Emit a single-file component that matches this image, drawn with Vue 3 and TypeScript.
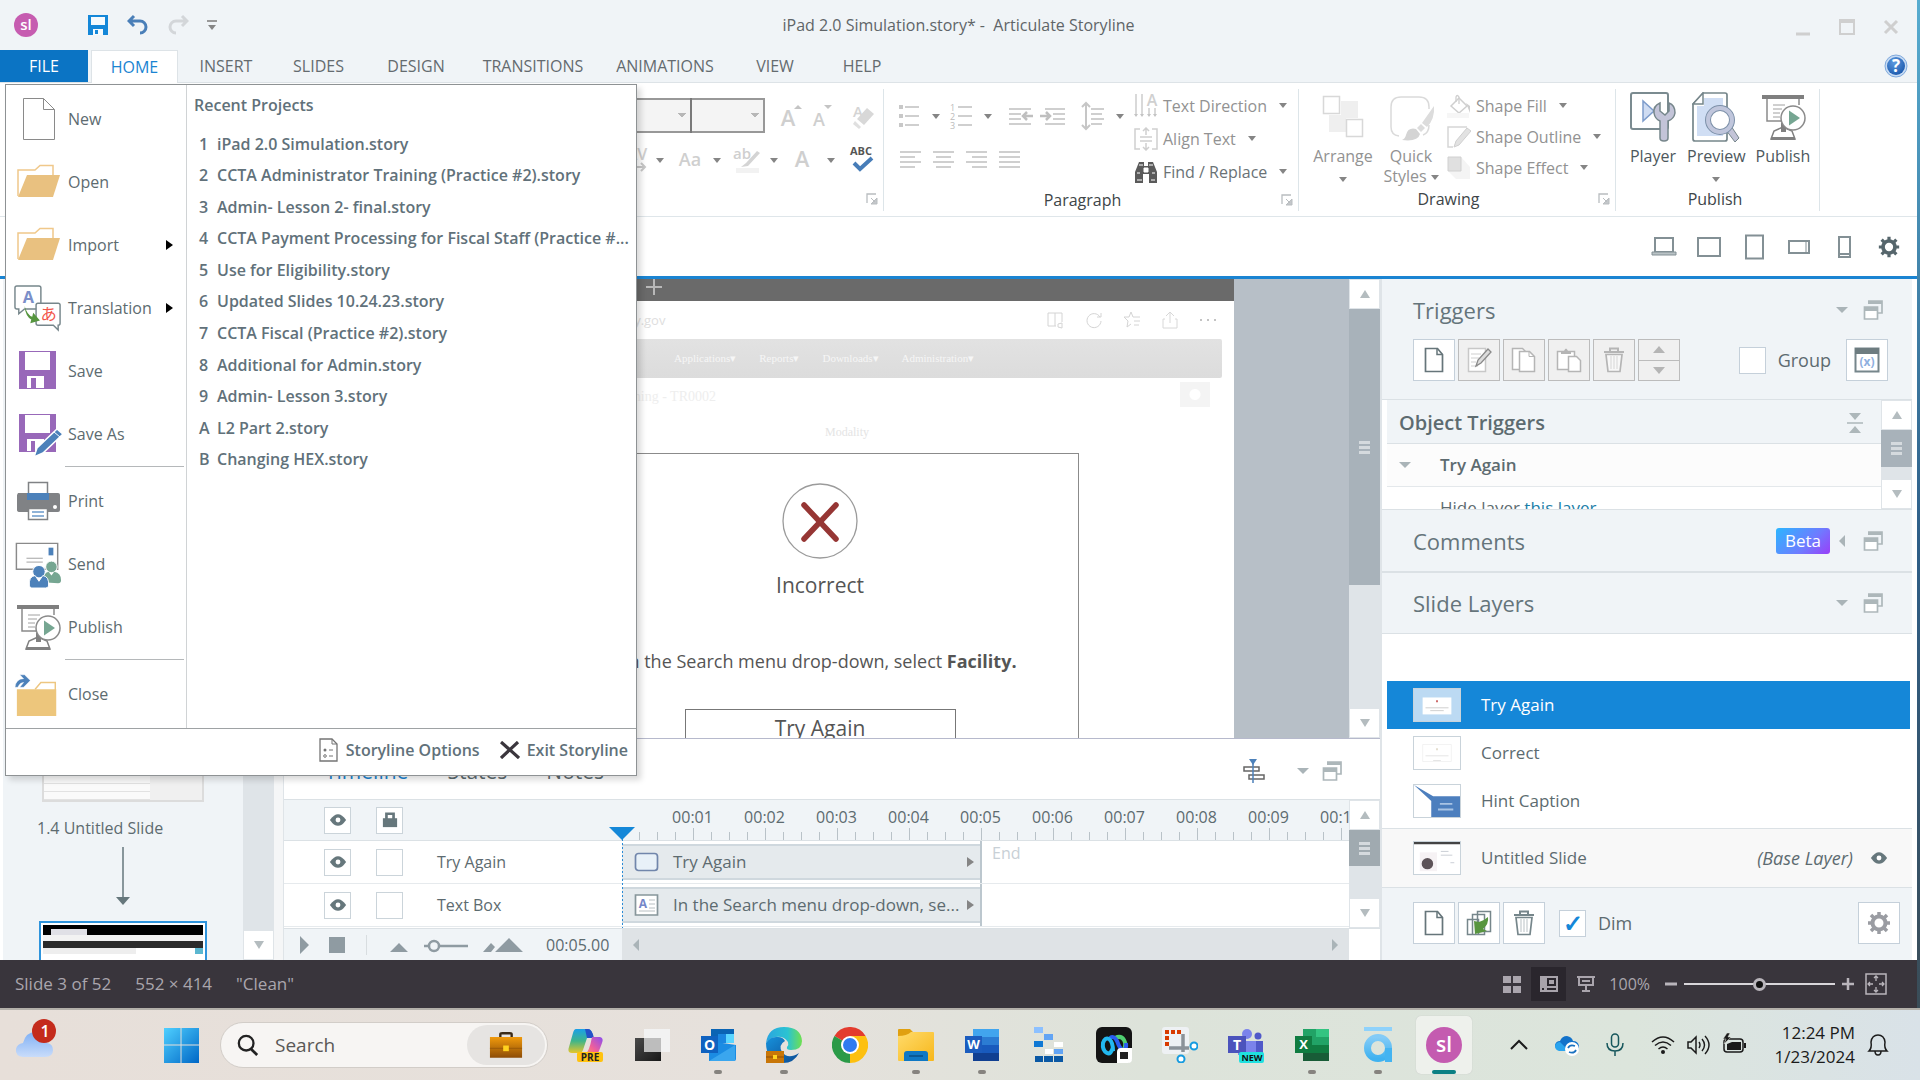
<script setup lang="ts">
import { ref } from 'vue'

interface MenuItem {
  label: string
  icon: string
  submenu?: boolean
  divider?: boolean
}

interface Layer {
  name: string
  kind: 'dialog' | 'faint' | 'hint'
}

const ribbonTabs = ['INSERT', 'SLIDES', 'DESIGN', 'TRANSITIONS', 'ANIMATIONS', 'VIEW', 'HELP']

const menuItems: MenuItem[] = [
  { label: 'New', icon: 'm-new' },
  { label: 'Open', icon: 'm-open' },
  { label: 'Import', icon: 'm-open', submenu: true },
  { label: 'Translation', icon: 'm-translate', submenu: true },
  { label: 'Save', icon: 'm-save' },
  { label: 'Save As', icon: 'm-saveas' },
  { label: 'Print', icon: 'm-print', divider: true },
  { label: 'Send', icon: 'm-send' },
  { label: 'Publish', icon: 'm-publish' },
  { label: 'Close', icon: 'm-close', divider: true },
]

const recent: [string, string][] = [
  ['1', 'iPad 2.0 Simulation.story'],
  ['2', 'CCTA Administrator Training (Practice #2).story'],
  ['3', 'Admin- Lesson 2- final.story'],
  ['4', 'CCTA Payment Processing for Fiscal Staff (Practice #...'],
  ['5', 'Use for Eligibility.story'],
  ['6', 'Updated Slides 10.24.23.story'],
  ['7', 'CCTA Fiscal (Practice #2).story'],
  ['8', 'Additional for Admin.story'],
  ['9', 'Admin- Lesson 3.story'],
  ['A', 'L2 Part 2.story'],
  ['B', 'Changing HEX.story'],
]

const seconds = ['00:01', '00:02', '00:03', '00:04', '00:05', '00:06', '00:07', '00:08', '00:09', '00:10']
const siteNav = ['Applications', 'Reports', 'Downloads', 'Administration']
const devices = ['d-laptop', 'd-tablet-l', 'd-tablet-p', 'd-phone-l', 'd-phone-p', 'gear']
const triggerTools = ['t-edit', 't-copy', 't-paste', 't-trash']

const layers: Layer[] = [
  { name: 'Try Again', kind: 'dialog' },
  { name: 'Correct', kind: 'faint' },
  { name: 'Hint Caption', kind: 'hint' },
]
const activeLayer = ref('Try Again')

const tracks = [
  { name: 'Try Again', label: 'Try Again', icon: 'k-shape' },
  { name: 'Text Box', label: 'In the Search menu drop-down, se...', icon: 'k-text' },
]

const apps = [
  { id: 'a-copilot', name: 'Copilot', open: false },
  { id: 'a-taskview', name: 'Task view', open: false },
  { id: 'a-outlook', name: 'Outlook', open: true },
  { id: 'a-edge', name: 'Edge', open: true },
  { id: 'a-chrome', name: 'Chrome', open: false },
  { id: 'a-files', name: 'File Explorer', open: true },
  { id: 'a-word', name: 'Word', open: true },
  { id: 'a-blocks', name: 'Blocks', open: false },
  { id: 'a-webex', name: 'Webex', open: false },
  { id: 'a-snip', name: 'Snipping Tool', open: false },
  { id: 'a-teams', name: 'Teams', open: false },
  { id: 'a-excel', name: 'Excel', open: true },
  { id: 'a-articulate', name: 'Articulate', open: true },
  { id: 'a-storyline', name: 'Storyline', open: true, active: true },
]

const group = ref(false)
const dim = ref(true)
const zoom = ref(50)
</script>

<template>
  <svg class="paints" aria-hidden="true">
    <defs>
      <linearGradient id="gWin" x1="0" y1="0" x2="1" y2="1"><stop offset="0" stop-color="#4fd0ff" /><stop offset="1" stop-color="#0067c6" /></linearGradient>
      <linearGradient id="gCloud" x1="0" y1="0" x2="0" y2="1"><stop offset="0" stop-color="#7fb0f5" /><stop offset="1" stop-color="#c9dcfa" /></linearGradient>
      <linearGradient id="gCase" x1="0" y1="0" x2="0" y2="1"><stop offset="0" stop-color="#f09a0c" /><stop offset="1" stop-color="#8d4c06" /></linearGradient>
      <linearGradient id="gCopA" x1="0" y1="0" x2="0" y2="1"><stop offset="0" stop-color="#1a9fe8" /><stop offset="0.5" stop-color="#3fb58a" /><stop offset="1" stop-color="#e6c62a" /></linearGradient>
      <linearGradient id="gCopB" x1="1" y1="0" x2="0" y2="1"><stop offset="0" stop-color="#8a4df0" /><stop offset="0.6" stop-color="#f0609a" /><stop offset="1" stop-color="#ff9a5c" /></linearGradient>
      <linearGradient id="gEdge" x1="0" y1="0" x2="1" y2="0"><stop offset="0" stop-color="#2aa5e0" /><stop offset="0.6" stop-color="#2bc3d2" /><stop offset="1" stop-color="#6fe04f" /></linearGradient>
      <linearGradient id="gEdgeB" x1="0" y1="0" x2="1" y2="1"><stop offset="0" stop-color="#1792dc" /><stop offset="1" stop-color="#0c4c94" /></linearGradient>
      <linearGradient id="gFolder" x1="0" y1="0" x2="1" y2="1"><stop offset="0" stop-color="#ffdb6b" /><stop offset="1" stop-color="#f7b71b" /></linearGradient>
      <linearGradient id="gArt" x1="0" y1="0" x2="0" y2="1"><stop offset="0" stop-color="#83cbf7" /><stop offset="1" stop-color="#3fb2f0" /></linearGradient>
      <linearGradient id="gDark" x1="0" y1="0" x2="1" y2="1"><stop offset="0" stop-color="#4a4a4a" /><stop offset="1" stop-color="#181818" /></linearGradient>
      <radialGradient id="gHelp" cx="0.4" cy="0.3" r="0.8"><stop offset="0" stop-color="#5d9ae0" /><stop offset="1" stop-color="#1653a8" /></radialGradient>
    </defs>
  </svg>
  <svg class="symbols" aria-hidden="true">
    <symbol id="logo" viewBox="0 0 24 24"><circle cx="12" cy="12" r="12" fill="#c65cb0" /><text x="12" y="17" font-size="15" font-weight="600" fill="#fff" text-anchor="middle">sl</text></symbol>
    <symbol id="q-save" viewBox="0 0 22 22"><path d="M1 1h20v20H1z" fill="#1487d8" /><path d="M4 3h14v8H4zM6 15h10v6H6z" fill="#f5fafd" /><path d="M8 16h3v4H8z" fill="#1487d8" /></symbol>
    <symbol id="q-undo" viewBox="0 0 22 20"><path d="M7 1L2 6l5 5M3 6h10a6 6 0 0 1 0 12" fill="none" stroke="#4a7fb8" stroke-width="3" /></symbol>
    <symbol id="q-redo" viewBox="0 0 22 20"><path d="M15 1l5 5-5 5M19 6H9a6 6 0 0 0 0 12" fill="none" stroke="#d3d6d9" stroke-width="3" /></symbol>
    <symbol id="help" viewBox="0 0 24 24"><circle cx="12" cy="12" r="11" fill="#c8dcf4" stroke="#7fa9dc" /><circle cx="12" cy="12" r="9" fill="url(#gHelp)" /><text x="12" y="18" font-size="17" font-weight="700" fill="#fff" text-anchor="middle">?</text></symbol>

    <symbol id="m-new" viewBox="0 0 48 48"><path d="M9.500 3.500h20l11 11v30h-31z" fill="#fff" stroke="#8a8a8a" /><path d="M29.500 3.500v11h11" fill="none" stroke="#8a8a8a" /></symbol>
    <symbol id="m-open" viewBox="0 0 48 48"><path d="M4 38V12h17l5-4.500h13V17" fill="#fff" stroke="#f0c88a" stroke-width="1.500" /><path d="M13 17h33l-7 22H4z" fill="#e9c180" /></symbol>
    <symbol id="m-translate" viewBox="0 0 50 50"><path d="M3 2h23q2 0 2 2v20q0 2-2 2H11l-6 5v-5H3q-2 0-2-2V4q0-2 2-2z" fill="#fff" stroke="#76868b" stroke-width="1.500" /><text x="15" y="20" font-size="17" font-weight="700" fill="#7b8fc9" text-anchor="middle">A</text><path d="M25 20h21q2 0 2 2v19q0 2-2 2v5l-5-5H25q-2 0-2-2V22q0-2 2-2z" fill="#fff" stroke="#76868b" stroke-width="1.500" /><path d="M11 23q3 10 8 11l1-4 7 8-10 3 1-4q-6-3-7-14z" fill="#56953f" /><text x="36" y="38" font-size="17" fill="#f2564b" text-anchor="middle">あ</text></symbol>
    <symbol id="m-save" viewBox="0 0 48 48"><path d="M5 4h37v38H5z" fill="#9868b9" /><path d="M11 5h25v18H11zM13 29h17v12H13z" fill="#fff" /><path d="M17 31h5v10h-5z" fill="#9868b9" /></symbol>
    <symbol id="m-saveas" viewBox="0 0 48 48"><path d="M5 4h37v38H5z" fill="#9868b9" /><path d="M11 5h25v18H11zM13 29h17v12H13z" fill="#fff" /><path d="M17 31h4v10h-4z" fill="#9868b9" /><path d="M20 47l3-9 20-19 6 5-20 19z" fill="#4c81ba" stroke="#fff" stroke-width="1.500" /><path d="M40 22l6 5" stroke="#fff" /></symbol>
    <symbol id="m-print" viewBox="0 0 48 48"><path d="M4 16h40q2 0 2 2v15q0 2-2 2H6q-3 0-3-2V18z" fill="#808285" /><path d="M14.500 5.500h19v15h-19z" fill="#fff" stroke="#808285" stroke-width="1.500" /><path d="M13 16h22v7H13z" fill="#4c81ba" /><path d="M14.500 31.500h19v11h-19z" fill="#fff" stroke="#808285" stroke-width="1.500" /><path d="M18 35h12M18 39h12" stroke="#6b9bcb" stroke-width="1.500" /><circle cx="41" cy="30" r="2" fill="#fff" /></symbol>
    <symbol id="m-send" viewBox="0 0 50 50"><path d="M2.500 3.500h43v27h-43z" fill="#fff" stroke="#8a8a8a" stroke-width="1.500" /><path d="M36 8h5v8h-5z" fill="#4c81ba" /><path d="M13 19h17M13 23h17" stroke="#a0a0a0" /><circle cx="39" cy="28" r="6" fill="#76a692" stroke="#fff" /><path d="M30 44q0-10 6-11l3 4 3-4q7 1 7 9 0 3-3 3z" fill="#76a692" /><circle cx="26" cy="33" r="6.500" fill="#4c81ba" stroke="#fff" /><path d="M16 48q-1-10 6-11l4 6 4-6q7 1 6 11-1 2-3 2H18z" fill="#4c81ba" stroke="#fff" /></symbol>
    <symbol id="m-publish" viewBox="0 0 48 48"><path d="M3 2h42v4H3z" fill="#7f7f7f" /><path d="M8 6v22h16M40 6v6" fill="none" stroke="#8a8a8a" stroke-width="1.500" /><path d="M14 12h12M14 16h9M14 20h7M14 24h7" stroke="#a0a0a0" /><path d="M24 34l-9 4-3 8h24l-3-8z" fill="#fff" stroke="#808080" stroke-width="1.500" /><path d="M22 30h5v9h-5zM12 44h24v3H12z" fill="#808080" /><circle cx="34" cy="25" r="12" fill="#fff" stroke="#8a8a8a" stroke-width="1.500" /><path d="M30 17.500v15l11-7.500z" fill="#76a692" /></symbol>
    <symbol id="m-close" viewBox="0 0 50 50"><path d="M22 20l6-7h15v8" fill="#fff" stroke="#edc680" stroke-width="1.500" /><path d="M3 20h41v28H3z" fill="#edc67c" /><path d="M1 18q1-9 9-9l-4-4h5l6 6-7 7H6l4-5q-4 0-6 5z" fill="#4c81ba" stroke="#fff" stroke-width="0.500" /></symbol>
    <symbol id="m-options" viewBox="0 0 20 24"><path d="M1 1h12l5 5v17H1z" fill="#fff" stroke="#747474" stroke-width="1.300" /><path d="M13 1v5h5" fill="none" stroke="#747474" /><circle cx="6" cy="12" r="1.500" fill="#747474" /><circle cx="6" cy="18" r="1.300" fill="none" stroke="#747474" /><path d="M10 12h4M10 18h4" stroke="#747474" /></symbol>
    <symbol id="m-exit" viewBox="0 0 20 18"><path d="M1 1l18 16M18 1L1 17" stroke="#3b363d" stroke-width="3.200" /></symbol>

    <symbol id="r-grow" viewBox="0 0 28 28"><text x="12" y="24" font-size="22" font-weight="600" fill="#cfcfcf" text-anchor="middle">A</text><path d="M18 7l4-4 4 4z" fill="#c4c4c4" /></symbol>
    <symbol id="r-shrink" viewBox="0 0 28 28"><text x="10" y="24" font-size="18" font-weight="600" fill="#cfcfcf" text-anchor="middle">A</text><path d="M15 3h8l-4 4z" fill="#c4c4c4" /></symbol>
    <symbol id="r-clear" viewBox="0 0 28 28"><text x="9" y="15" font-size="15" font-weight="600" fill="#d4d4d4" text-anchor="middle">A</text><path d="M8 17L18 6l7 6-10 11z" fill="#d8d8d8" /><path d="M6 19l6 6-2 2-6-5z" fill="#e0e0e0" /></symbol>
    <symbol id="r-kern" viewBox="0 0 32 32"><text x="20" y="16" font-size="16" font-weight="600" fill="#d0d0d0" text-anchor="middle">AV</text><path d="M6 23h22M24 19l4 4-4 4" fill="none" stroke="#c8c8c8" stroke-width="2" /></symbol>
    <symbol id="r-case" viewBox="0 0 32 32"><text x="16" y="22" font-size="18" font-weight="600" fill="#cfcfcf" text-anchor="middle">Aa</text></symbol>
    <symbol id="r-mark" viewBox="0 0 32 32"><text x="11" y="15" font-size="15" font-weight="600" fill="#cfcfcf" text-anchor="middle">ab</text><path d="M26 7L15 19l-5 4 7-1L29 9z" fill="#d4d4d4" /><path d="M5 24h23v5H5z" fill="#f2f2f2" /></symbol>
    <symbol id="r-color" viewBox="0 0 32 32"><text x="14" y="23" font-size="22" font-weight="600" fill="#cfcfcf" text-anchor="middle">A</text></symbol>
    <symbol id="r-spell" viewBox="0 0 32 32"><text x="16" y="11" font-size="11" font-weight="700" fill="#555" text-anchor="middle">ABC</text><path d="M9 19l6 6L27 14" fill="none" stroke="#477db8" stroke-width="4" /></symbol>
    <symbol id="r-bullets" viewBox="0 0 32 32"><path d="M12 7h14M12 16h14M12 25h14" stroke="#cfcfcf" stroke-width="2" /><path d="M6 5h4v4H6zM6 14h4v4H6zM6 23h4v4H6z" fill="#c8c8c8" /></symbol>
    <symbol id="r-numbers" viewBox="0 0 32 32"><path d="M13 7h14M13 16h14M13 25h14" stroke="#cfcfcf" stroke-width="2" /><text x="5" y="11" font-size="9" fill="#bbb">1</text><text x="5" y="20" font-size="9" fill="#bbb">2</text><text x="5" y="29" font-size="9" fill="#bbb">3</text></symbol>
    <symbol id="r-outdent" viewBox="0 0 32 32"><path d="M4 9h22M4 14h12M4 19h12M4 24h22" stroke="#cfcfcf" stroke-width="2" /><path d="M28 16h-9M22 12l-4 4 4 4" fill="none" stroke="#bfbfbf" stroke-width="2.500" /></symbol>
    <symbol id="r-indent" viewBox="0 0 32 32"><path d="M8 9h20M16 14h12M16 19h12M8 24h20" stroke="#cfcfcf" stroke-width="2" /><path d="M3 16h9M9 12l4 4-4 4" fill="none" stroke="#bfbfbf" stroke-width="2.500" /></symbol>
    <symbol id="r-spacing" viewBox="0 0 32 32"><path d="M9 3v26M5 7l4-4 4 4M5 25l4 4 4-4" fill="none" stroke="#c6c6c6" stroke-width="2" /><path d="M14 9h13M14 14h11M14 19h13M14 24h11" stroke="#cfcfcf" stroke-width="2" /></symbol>
    <symbol id="r-left" viewBox="0 0 32 32"><path d="M6 10h21M6 15h15M6 20h21M6 25h15" stroke="#cfcfcf" stroke-width="2" /></symbol>
    <symbol id="r-center" viewBox="0 0 32 32"><path d="M6 10h21M9 15h15M6 20h21M9 25h15" stroke="#cfcfcf" stroke-width="2" /></symbol>
    <symbol id="r-right" viewBox="0 0 32 32"><path d="M6 10h21M12 15h15M6 20h21M12 25h15" stroke="#cfcfcf" stroke-width="2" /></symbol>
    <symbol id="r-justify" viewBox="0 0 32 32"><path d="M6 10h21M6 15h21M6 20h21M6 25h21" stroke="#cfcfcf" stroke-width="2" /></symbol>
    <symbol id="r-textdir" viewBox="0 0 24 24"><path d="M2 0v22M8 0v22M15 14v8M21 14v8" stroke="#cdcdcd" stroke-width="1.500" /><text x="18" y="12" font-size="16" font-weight="600" fill="#d0d0d0" text-anchor="middle">A</text><path d="M0 20h4l-2 3zM6 20h4l-2 3zM13 20h4l-2 3zM19 20h4l-2 3z" fill="#c4c4c4" /></symbol>
    <symbol id="r-aligntext" viewBox="0 0 24 24"><path d="M6 2H1v20h5M18 2h5v20h-5" fill="none" stroke="#d0d0d0" stroke-width="1.500" /><path d="M12 1v7M9 4l3-3 3 3M12 23v-7M9 20l3 3 3-3M6 10h12M6 14h12" fill="none" stroke="#cfcfcf" stroke-width="1.500" /></symbol>
    <symbol id="r-find" viewBox="0 0 24 24"><path d="M5 2h5v4h4V2h5l4 10v11h-8v-9h-6v9H1V12z" fill="#5a5a5a" /><path d="M10 8h4v4h-4zM3 13h3M18 13h3M5 5h4M15 5h4M3 20h5M17 20h4" fill="#fff" stroke="#fff" /></symbol>
    <symbol id="r-launch" viewBox="0 0 12 12"><path d="M1 10V1h9" fill="none" stroke="#b9bdc0" stroke-width="1.300" /><path d="M5 5l4 4M11 5v6H5z" stroke="#b9bdc0" fill="#c4c7ca" /></symbol>
    <symbol id="r-arrange" viewBox="0 0 48 48"><path d="M22 8h17v17H22z" fill="#efefef" /><path d="M10 22h17v17H10z" fill="#efefef" /><path d="M4.500 3.500h16v17h-16zM27.500 26.500h16v17h-16z" fill="#fff" stroke="#d8d8d8" stroke-width="1.500" /></symbol>
    <symbol id="r-quick" viewBox="0 0 48 48"><path d="M12 43Q4 42 4 34V14Q4 4 14 4h18q10 0 10 10v2M42 32q0 8-6 10" fill="none" stroke="#dadada" stroke-width="1.500" /><path d="M47 13L35 30l5 4q8-8 7-21zM34 31l-4 4 4 4 4-4z" fill="#dcdcdc" /><path d="M29 36q-8-2-10 6-1 4-4 5 16 2 18-6z" fill="#d4d4d4" /></symbol>
    <symbol id="r-fill" viewBox="0 0 24 24"><path d="M4 12l8-8 8 8-8 7z" fill="#fff" stroke="#cfcfcf" stroke-width="1.500" /><path d="M9 8V3q1-3 3 0v7" fill="none" stroke="#cfcfcf" stroke-width="1.300" /><path d="M19 9l4 3v7z" fill="#cfcfcf" /><path d="M0 19h22v5H0z" fill="#f6f6f6" /></symbol>
    <symbol id="r-outline" viewBox="0 0 24 24"><path d="M20 2H1v20h5" fill="none" stroke="#d6d6d6" stroke-width="1.500" /><path d="M7 22l2-6L20 3l4 3-12 14z" fill="#e2e2e2" stroke="#cfcfcf" /></symbol>
    <symbol id="r-effect" viewBox="0 0 24 24"><path d="M2 2h13l8 9v12H9L2 16z" fill="#f4f4f4" /><path d="M1 1h13v14H1z" fill="#e0e0e0" stroke="#d0d0d0" /></symbol>
    <symbol id="r-player" viewBox="0 0 48 50"><path d="M4 1h33q2 0 2 2v32q0 2-2 2H4q-2 0-2-2V3q0-2 2-2z" fill="#fff" stroke="#7b8b90" stroke-width="2" /><path d="M14 9v20l11-10z" fill="#cfdcf2" stroke="#7d9ccb" stroke-width="1.500" /><path d="M31 11q-7 3-6 10 1 6 6 8v17q0 3 4 3t4-3V29q6-2 7-8 0-8-6-10v8l-4 4-5-4z" fill="#c3c4d8" stroke="#76868b" stroke-width="1.500" /></symbol>
    <symbol id="r-preview" viewBox="0 0 48 50"><path d="M11 1h22q2 0 2 2v44q0 2-2 2H3q-2 0-2-2V12z" fill="#fff" stroke="#76868b" stroke-width="1.700" /><path d="M12 6h19v38H5V14h7z" fill="#d0def4" /><path d="M11 1v11H1z" fill="#fff" stroke="#76868b" stroke-width="1.500" /><path d="M34 38l5-4 8 12-4 4z" fill="#c3c4d8" stroke="#76868b" /><circle cx="28" cy="28" r="12" fill="#fff" stroke="#7c90a8" stroke-width="6" /><circle cx="28" cy="28" r="12" fill="none" stroke="#c0c6dc" stroke-width="4" /></symbol>

    <symbol id="d-laptop" viewBox="0 0 26 26"><path d="M4 4h18v14H4z" fill="#fff" stroke="#839095" stroke-width="2" /><path d="M1 18h24v3H1z" fill="#b9c2c5" stroke="#839095" /></symbol>
    <symbol id="d-tablet-l" viewBox="0 0 26 26"><path d="M2 4h22v18H2z" fill="#fff" stroke="#839095" stroke-width="2" /></symbol>
    <symbol id="d-tablet-p" viewBox="0 0 26 26"><path d="M5 1.500h17v23H5z" fill="#fff" stroke="#839095" stroke-width="2" /></symbol>
    <symbol id="d-phone-l" viewBox="0 0 26 26"><path d="M3 7h20v12H3z" fill="#fff" stroke="#839095" stroke-width="2" /><path d="M20 7v12" stroke="#839095" /></symbol>
    <symbol id="d-phone-p" viewBox="0 0 26 26"><path d="M8 3h11v20H8z" fill="#fff" stroke="#839095" stroke-width="2" /><path d="M8 20h11" stroke="#839095" stroke-width="2" /></symbol>
    <symbol id="gear" viewBox="0 0 26 26"><circle cx="13" cy="13" r="6.500" fill="none" stroke="currentColor" stroke-width="4" /><path d="M13 2v4M13 20v4M2 13h4M20 13h4M5 5l3 3M18 18l3 3M21 5l-3 3M8 18l-3 3" stroke="currentColor" stroke-width="3.500" /></symbol>

    <symbol id="t-new" viewBox="0 0 26 26"><path d="M4.500 1.500h12l5 6v17h-17z" fill="#fff" stroke="#66757a" stroke-width="1.700" /><path d="M16 1.500v6h5.500" fill="none" stroke="#66757a" stroke-width="1.500" /></symbol>
    <symbol id="t-edit" viewBox="0 0 26 26"><path d="M2.500 1.500h17v23h-17z" fill="#fff" stroke="#c8c8c8" stroke-width="1.500" /><path d="M5 7h10M5 11h8M5 15h5M5 19h7" stroke="#cfcfcf" /><path d="M10 19l2-6L22 2l3 3-10 11z" fill="#dcdcdc" stroke="#8a8a8a" stroke-width="1.300" /></symbol>
    <symbol id="t-copy" viewBox="0 0 26 26"><path d="M1.500 1.500h10l4 4v17h-14z" fill="#fff" stroke="#b5b5b5" stroke-width="1.500" /><path d="M8.500 4.500h10l5 5v15h-15z" fill="#fff" stroke="#b5b5b5" stroke-width="1.500" /><path d="M18 4.500v5h5" fill="none" stroke="#b5b5b5" /></symbol>
    <symbol id="t-paste" viewBox="0 0 26 26"><path d="M1.500 4.500h17v18h-17z" fill="#fff" stroke="#b5b5b5" stroke-width="1.500" /><path d="M5 4h3q2-5 4 0h3v3H5z" fill="#b5b5b5" /><path d="M12.500 9.500h8l4 4v11h-12z" fill="#fff" stroke="#b5b5b5" stroke-width="1.500" /></symbol>
    <symbol id="t-trash" viewBox="0 0 26 26"><path d="M3 5h20M9 4V1.500h8V4" fill="none" stroke="currentColor" stroke-width="2" /><path d="M5 7.500h16L19 24.500H7z" fill="#fff" fill-opacity="0.500" stroke="currentColor" stroke-width="1.700" /><path d="M10 9v13M13 9v13M16 9v13" stroke="currentColor" stroke-opacity="0.500" /></symbol>
    <symbol id="t-var" viewBox="0 0 26 26"><path d="M1.500 1.500h23v23h-23z" fill="#fff" stroke="#76868b" stroke-width="2" /><path d="M1 1h24v6H1z" fill="#6d7c80" /><text x="13" y="19" font-size="12" font-weight="700" fill="#8fb0e0" text-anchor="middle">(x)</text></symbol>
    <symbol id="t-dup" viewBox="0 0 26 26"><path d="M11.500 1.500h13v20h-13zM6.500 4.500h12v20h-12zM1.500 9.500h11v15h-11z" fill="#fff" stroke="#76868b" stroke-width="1.500" /><path d="M22 7q-3 3-9 5l-5-1 1 13 12-3-4-2q6-5 5-12z" fill="#58953f" /></symbol>
    <symbol id="restore" viewBox="0 0 20 20"><path d="M5 1h14v12h-4" fill="none" stroke="#adb7ba" stroke-width="1.700" /><path d="M5 1h14v3H5z" fill="#adb7ba" /><path d="M1.500 7h13v12h-13z" fill="#fff" stroke="#adb7ba" stroke-width="1.700" /><path d="M1 7h14v4H1z" fill="#adb7ba" /></symbol>
    <symbol id="eye" viewBox="0 0 20 14"><path d="M1 7q9-13 18 0-9 13-18 0z" fill="#66777c" /><circle cx="10" cy="7" r="2.700" fill="#fff" /></symbol>
    <symbol id="lock" viewBox="0 0 20 18"><path d="M2 7h16v10H2z" fill="#66777c" /><path d="M6 8V2h8v6" fill="none" stroke="#66777c" stroke-width="3" /></symbol>
    <symbol id="k-shape" viewBox="0 0 26 20"><rect x="1.500" y="1.500" width="22" height="17" rx="3" fill="#e8f1f8" stroke="#7186ab" stroke-width="1.700" /></symbol>
    <symbol id="k-text" viewBox="0 0 26 22"><path d="M1.500 1h22v20h-22z" fill="#fff" stroke="#87969b" stroke-width="1.700" /><text x="9" y="14" font-size="12" font-weight="700" fill="#7487c9" text-anchor="middle">A</text><path d="M15 6h6M15 10h6M15 14h6M5 17h16" stroke="#b8bfc2" /></symbol>
    <symbol id="k-snap" viewBox="0 0 24 26"><path d="M2 9h15v4H2zM7 17h15v4H7z" fill="#fff" stroke="#666" stroke-width="1.500" /><path d="M11 1v24" stroke="#4c81ba" stroke-width="1.500" /><path d="M7 1h8l-4 6z" fill="#4c81ba" /></symbol>

    <symbol id="s-grid" viewBox="0 0 20 18"><path d="M1 1h8v7H1zM11 1h8v7h-8zM1 11h8v7H1zM11 11h8v7h-8z" fill="#aaa5ad" /></symbol>
    <symbol id="s-slide" viewBox="0 0 20 18"><path d="M1 1h18v16H1z" fill="#a8a3ab" /><path d="M8 3h9v8H8zM3 13h2v2H3zM8 13h9v2H8z" fill="#2a262d" /><path d="M10 5h5v4h-5z" fill="#a8a3ab" /></symbol>
    <symbol id="s-show" viewBox="0 0 20 18"><path d="M1 2h18M3 2v8h14V2M6 6h8M10 10v6M6 16h8" fill="none" stroke="#aaa5ad" stroke-width="2" /></symbol>
    <symbol id="s-fit" viewBox="0 0 22 22"><path d="M1 1h20v20H1z" fill="none" stroke="#b9b5bb" stroke-width="1.500" /><path d="M11 3v5M11 14v5M3 11h5M14 11h5M9 5l2-2 2 2M9 17l2 2 2-2M5 9l-2 2 2 2M17 9l2 2-2 2" fill="none" stroke="#b9b5bb" stroke-width="1.300" /></symbol>

    <symbol id="w-weather" viewBox="0 0 44 44"><path d="M10 38Q2 37 3 30q1-5 7-6 3-12 14-11 10 1 10 11 6 1 6 7 0 7-8 7z" fill="url(#gCloud)" /><circle cx="31" cy="12" r="12" fill="#c42b1c" /><text x="32" y="18" font-size="16" fill="#fff" font-weight="600" text-anchor="middle">1</text></symbol>
    <symbol id="w-start" viewBox="0 0 36 36"><path d="M0 0h17v17H0zM18 0h18v17H18zM0 18h17v18H0zM18 18h18v18H18z" fill="url(#gWin)" /></symbol>
    <symbol id="w-case" viewBox="0 0 36 28"><path d="M12 5V2q0-1 2-1h8q2 0 2 1v3" fill="none" stroke="#3a2a18" stroke-width="2.500" /><path d="M1 5h34v22H1z" fill="url(#gCase)" /><path d="M1 17h34" stroke="#9a5a08" /><path d="M15 14h6v6h-6z" fill="#ffd21f" /></symbol>
    <symbol id="w-search" viewBox="0 0 24 24"><circle cx="10" cy="10" r="8" fill="none" stroke="#222" stroke-width="2.500" /><path d="M15 16l7 7" stroke="#222" stroke-width="3" /></symbol>

    <symbol id="a-copilot" viewBox="0 0 36 36"><path d="M8 2h12q4 0 5 8l-6 1-4 12q-1 3-4 3H4q-5 0-3-6L5 6q1-4 3-4z" fill="url(#gCopA)" /><path d="M17 2h3q4 0 6 9h-7z" fill="#2450c8" /><path d="M24 10h8q4 1 2 6l-3 8q-1 3-5 3h-9q4-1 7-17z" fill="url(#gCopB)" /><rect x="9" y="25" width="26" height="10" rx="2" fill="#ffc20e" /><text x="22" y="34" font-size="10" font-weight="700" fill="#222" text-anchor="middle">PRE</text></symbol>
    <symbol id="a-taskview" viewBox="0 0 36 36"><path d="M1 11h26v23H1z" fill="url(#gDark)" /><path d="M10 2h26v23H10z" fill="#f2f2f2" /><path d="M10 11h17v14H10z" fill="#bdbdbd" /></symbol>
    <symbol id="a-outlook" viewBox="0 0 36 36"><path d="M11 2h23v14H11z" fill="#0a64b4" /><path d="M18 7h8v9h-8z" fill="#1a86e0" /><path d="M26 7h8v9h-8z" fill="#5bd6ff" /><path d="M9 14l27 4v14q0 2-2 2H9z" fill="#1b8ce3" /><path d="M9 34l26-16v16z" fill="#3aa6ee" /><path d="M1 9h17v17H1z" fill="#0f62c0" /><text x="9.500" y="23" font-size="14" font-weight="700" fill="#fff" text-anchor="middle">O</text></symbol>
    <symbol id="a-edge" viewBox="0 0 36 36"><path d="M0 16Q2 0 18 0q17 0 18 14 0 9-11 9-5 0-4-3 2-2 1-5Q18 9 10 10 3 11 0 16z" fill="url(#gEdge)" /><path d="M0 16q4-7 12-6 5 0 7 4-7 4-3 11 6 8 17 1-5 10-16 10Q0 34 0 16z" fill="url(#gEdgeB)" /><path d="M0 24h18v12H0z" fill="#c87608" /><path d="M0 30h18" stroke="#8d4c06" /><path d="M7 28h4v4H7z" fill="#ffd21f" /></symbol>
    <symbol id="a-chrome" viewBox="0 0 36 36"><path d="M18 18L2.400 9A18 18 0 0 1 33.600 9z" fill="#e33b2e" /><path d="M18 18L33.600 9A18 18 0 0 1 18 36z" fill="#fdc010" /><path d="M18 18l0 18A18 18 0 0 1 2.400 9z" fill="#2a9a47" /><path d="M18 9h15.600L26 22l-8 14 6-14z" fill="#fdc010" /><circle cx="18" cy="18" r="9" fill="#fff" /><circle cx="18" cy="18" r="7" fill="#2f7bf0" /></symbol>
    <symbol id="a-files" viewBox="0 0 36 36"><path d="M0 3q0-1 1-1h11l3 3h20v8H0z" fill="#e0a010" /><path d="M0 9q9 0 13-4h22q1 0 1 1v27q0 1-1 1H1q-1 0-1-1z" fill="url(#gFolder)" /><path d="M6 34V27q0-3 3-3h18q3 0 3 3v7z" fill="#0f78c4" /><path d="M11 29h14" stroke="#0a4f86" stroke-width="1.500" /></symbol>
    <symbol id="a-word" viewBox="0 0 36 36"><path d="M9 2h26v8H9z" fill="#41a5ee" /><path d="M9 10h26v8H9z" fill="#2b7cd3" /><path d="M9 18h26v8H9z" fill="#185abd" /><path d="M9 26h26v8H9z" fill="#103f91" /><path d="M1 9h17v17H1z" fill="#1b5cbe" /><text x="9.500" y="22" font-size="13" font-weight="700" fill="#fff" text-anchor="middle">W</text></symbol>
    <symbol id="a-blocks" viewBox="0 0 36 36"><path d="M4 0h9v6H4z" fill="#8cc0ff" /><path d="M14 7h9v6h-9z" fill="#62a4f4" /><path d="M4 14h9v6H4z" fill="#0f78d4" /><path d="M24 15h9v5h-9zM15 22h8v5h-8z" fill="#fff" /><path d="M24 22h9v5h-9z" fill="#62a4f4" /><path d="M5 29h8v6H5zM14 29h9v6h-9zM24 29h9v6h-9z" fill="#0a58a4" /></symbol>
    <symbol id="a-webex" viewBox="0 0 36 36"><rect width="36" height="36" rx="6" fill="#141414" /><path d="M19 11q6-3 9 2 3 5-1 11" fill="none" stroke="#50d070" stroke-width="4" /><path d="M14 11q4-3 7 3 3 8 6 10 4-2 3-8" fill="none" stroke="#2a5cf0" stroke-width="4" /><path d="M17 20q-2 8-6 6-5-3-4-10 2-6 6-4 4 3 4 12" fill="none" stroke="#22b8f0" stroke-width="4" /><path d="M21 25q0-4 4-4h11v11q0 4-4 4H21z" fill="#fff" /><path d="M24 25h8v7h-8z" fill="#222" /></symbol>
    <symbol id="a-snip" viewBox="0 0 36 36"><rect width="27" height="27" rx="3" fill="#eef1f4" /><path d="M3 5h16M5 9v10" fill="none" stroke="#d83b01" stroke-width="4" stroke-dasharray="4 2" /><path d="M21 7v18M7 21h20" stroke="#8b9299" stroke-width="3.500" /><circle cx="32" cy="19" r="3.500" fill="#fff" stroke="#169be0" stroke-width="2" /><circle cx="19" cy="32" r="3.500" fill="#fff" stroke="#169be0" stroke-width="2" /></symbol>
    <symbol id="a-teams" viewBox="0 0 36 36"><circle cx="19" cy="7" r="5" fill="#7b83eb" /><circle cx="30" cy="9" r="3.500" fill="#5059c9" /><path d="M24 14h11v14H24z" fill="#5059c9" /><path d="M10 14h18v14H10z" fill="#7b83eb" /><path d="M0 9h18v17H0z" fill="#4b53bc" /><text x="9" y="23" font-size="14" font-weight="700" fill="#fff" text-anchor="middle">T</text><rect x="11" y="25" width="25" height="11" rx="2" fill="#1fe0e0" /><text x="24" y="34" font-size="9" font-weight="700" fill="#111" text-anchor="middle">NEW</text></symbol>
    <symbol id="a-excel" viewBox="0 0 36 36"><path d="M9 2h26v32H9z" fill="#21a366" /><path d="M22 2h13v8H22z" fill="#33c481" /><path d="M9 18h26v8H9z" fill="#107c41" /><path d="M9 26h26v8H9z" fill="#185c37" /><path d="M1 9h17v17H1z" fill="#107c41" /><text x="9.500" y="22" font-size="13" font-weight="700" fill="#fff" text-anchor="middle">X</text></symbol>
    <symbol id="a-articulate" viewBox="0 0 36 36"><path d="M4 0h28v4H4z" fill="#8fd2fb" /><circle cx="18" cy="21" r="10.500" fill="none" stroke="url(#gArt)" stroke-width="7" /><path d="M25 21h7v14h-7z" fill="#44b4f1" /></symbol>
    <symbol id="a-storyline" viewBox="0 0 36 36"><circle cx="18" cy="18" r="18" fill="#c45bb0" /><text x="18" y="25" font-size="21" font-weight="600" fill="#fff" text-anchor="middle">sl</text></symbol>

    <symbol id="y-cloud" viewBox="0 0 24 24"><path d="M4 17q-4-1-4-5 1-4 5-4 2-5 7-5 5 1 6 5 5 0 6 5v4z" fill="#1272ca" /><path d="M4 18q-4-1-4-5 1-4 5-4l9 9z" fill="#2aa4ee" /><circle cx="17" cy="16" r="7" fill="#fff" /><path d="M13 15q2-4 7-2M21 17q-2 4-7 2" fill="none" stroke="#1a72c0" stroke-width="1.700" /></symbol>
    <symbol id="y-mic" viewBox="0 0 24 24"><rect x="8.500" y="1" width="7" height="13" rx="3.500" fill="none" stroke="#17575c" stroke-width="1.500" /><path d="M4 10q0 8 8 8t8-8M12 18v5" fill="none" stroke="#17575c" stroke-width="1.500" /></symbol>
    <symbol id="y-wifi" viewBox="0 0 24 24"><path d="M1 9q11-10 22 0M4 12.500q8-7 16 0M7.500 16q4.500-4 9 0" fill="none" stroke="#1b1b1b" stroke-width="1.500" /><circle cx="12" cy="19" r="2" fill="#1b1b1b" /></symbol>
    <symbol id="y-sound" viewBox="0 0 24 24"><path d="M1 9h3l5-5v16l-5-5H1z" fill="none" stroke="#1b1b1b" stroke-width="1.500" /><path d="M12 9q2 3 0 6M15 6q5 6 0 12M18 3q8 9 0 18" fill="none" stroke="#1b1b1b" stroke-width="1.400" /></symbol>
    <symbol id="y-battery" viewBox="0 0 24 24"><rect x="1" y="6" width="19" height="13" rx="3" fill="none" stroke="#1b1b1b" stroke-width="1.500" /><path d="M4 11l5-2h9v8H4zM21 10h2v5h-2z" fill="#1b1b1b" /><path d="M4 0L0 6h3L1 11l7-7H5l2-4z" fill="#1b1b1b" stroke="#e0e5dd" stroke-width="0.500" /></symbol>
    <symbol id="y-bell" viewBox="0 0 24 24"><path d="M3 18q3-3 2-9 1-7 7-7t7 7q-1 6 2 9zM9 18q0 4 3 4t3-4" fill="none" stroke="#1b1b1b" stroke-width="1.500" /></symbol>
  </svg>

  <div class="screen">
    <div class="app">
      <header class="titlebar">
        <div class="quick">
          <svg class="logo"><use href="#logo" /></svg>
          <button aria-label="Save"><svg><use href="#q-save" /></svg></button>
          <button aria-label="Undo"><svg><use href="#q-undo" /></svg></button>
          <button aria-label="Redo" disabled><svg><use href="#q-redo" /></svg></button>
          <button class="customize" aria-label="Customize toolbar"><i class="tri down"></i></button>
        </div>
        <h1>iPad 2.0 Simulation.story* -&nbsp; Articulate Storyline</h1>
        <div class="window-buttons">
          <button aria-label="Minimize"><svg viewBox="0 0 18 18"><path d="M2 16h14" stroke="#cfcfcf" stroke-width="3" /></svg></button>
          <button aria-label="Maximize"><svg viewBox="0 0 18 18"><path d="M2 2h14v14H2zM2 4h14" fill="none" stroke="#cfcfcf" stroke-width="2" /></svg></button>
          <button aria-label="Close"><svg viewBox="0 0 18 18"><path d="M3 3l12 12M15 3L3 15" stroke="#cfcfcf" stroke-width="3" /></svg></button>
        </div>
      </header>

      <nav class="tabs">
        <button class="file">FILE</button>
        <button class="home">HOME</button>
        <div class="tab-grid">
          <button v-for="t in ribbonTabs" :key="t">{{ t }}</button>
        </div>
        <button class="help" aria-label="Help"><svg><use href="#help" /></svg></button>
      </nav>

      <section class="ribbon">
        <div class="rgroup font-group">
          <div class="rbody font-body">
            <div class="frow fields">
              <select disabled aria-label="Font"></select><select disabled aria-label="Font size"></select>
              <svg class="i28"><use href="#r-grow" /></svg>
              <svg class="i28"><use href="#r-shrink" /></svg>
              <svg class="i28"><use href="#r-clear" /></svg>
            </div>
            <div class="frow">
              <button v-for="k in ['r-kern', 'r-case', 'r-mark', 'r-color']" :key="k" class="split" disabled :aria-label="k">
                <svg><use :href="'#' + k" /></svg><i class="tri down"></i>
              </button>
              <button class="icon32" aria-label="Spelling"><svg><use href="#r-spell" /></svg></button>
            </div>
          </div>
          <footer><span></span><svg class="launch"><use href="#r-launch" /></svg></footer>
        </div>

        <div class="rgroup paragraph">
          <div class="rbody">
            <div class="para-tools">
              <div class="prow">
                <button class="split" disabled aria-label="Bullets"><svg><use href="#r-bullets" /></svg><i class="tri down"></i></button>
                <button class="split" disabled aria-label="Numbering"><svg><use href="#r-numbers" /></svg><i class="tri down"></i></button>
                <button class="icon32 lead" disabled aria-label="Outdent"><svg><use href="#r-outdent" /></svg></button>
                <button class="icon32" disabled aria-label="Indent"><svg><use href="#r-indent" /></svg></button>
                <button class="split lead" disabled aria-label="Line spacing"><svg><use href="#r-spacing" /></svg><i class="tri down"></i></button>
              </div>
              <div class="prow aligns">
                <button v-for="k in ['r-left', 'r-center', 'r-right', 'r-justify']" :key="k" class="icon32" disabled :aria-label="k"><svg><use :href="'#' + k" /></svg></button>
              </div>
            </div>
            <div class="stack tall">
              <button disabled><svg><use href="#r-textdir" /></svg>Text Direction<i class="tri down"></i></button>
              <button disabled><svg><use href="#r-aligntext" /></svg>Align Text<i class="tri down"></i></button>
              <button><svg><use href="#r-find" /></svg>Find / Replace<i class="tri down"></i></button>
            </div>
          </div>
          <footer><span>Paragraph</span><svg class="launch"><use href="#r-launch" /></svg></footer>
        </div>

        <div class="rgroup drawing">
          <div class="rbody">
            <button class="big" disabled><svg><use href="#r-arrange" /></svg><span>Arrange</span><i class="tri down"></i></button>
            <button class="big" disabled><svg><use href="#r-quick" /></svg><span>Quick<br />Styles<i class="tri down"></i></span></button>
            <div class="stack">
              <button disabled><svg><use href="#r-fill" /></svg>Shape Fill<i class="tri down"></i></button>
              <button disabled><svg><use href="#r-outline" /></svg>Shape Outline<i class="tri down"></i></button>
              <button disabled><svg><use href="#r-effect" /></svg>Shape Effect<i class="tri down"></i></button>
            </div>
          </div>
          <footer><span>Drawing</span><svg class="launch"><use href="#r-launch" /></svg></footer>
        </div>

        <div class="rgroup publish">
          <div class="rbody">
            <button class="big"><svg><use href="#r-player" /></svg><span>Player</span></button>
            <button class="big"><svg><use href="#r-preview" /></svg><span>Preview</span><i class="tri down"></i></button>
            <button class="big"><svg><use href="#m-publish" /></svg><span>Publish</span></button>
          </div>
          <footer><span>Publish</span></footer>
        </div>
      </section>

      <div class="devices">
        <button v-for="d in devices" :key="d" :aria-label="d"><svg><use :href="'#' + d" /></svg></button>
      </div>

      <main class="workspace">
        <aside class="scenes">
          <div class="scene-list">
            <div class="thumb previous"><div></div></div>
            <p>1.4 Untitled Slide</p>
            <svg class="flow" viewBox="0 0 14 58"><path d="M7 0v52" stroke="#66777c" stroke-width="1.500" /><path d="M0 50h14l-7 8z" fill="#66777c" /></svg>
            <div class="thumb current"><div class="t-top"><b></b></div><div class="t-url"></div><div class="t-nav"></div><div class="t-body"></div></div>
          </div>
          <div class="vscroll"><span class="fill"></span><button aria-label="Scroll down"><i class="tri down tallt"></i></button></div>
        </aside>

        <div class="center">
          <div class="stage">
            <div class="slide">
              <div class="s-strip"><svg viewBox="0 0 16 16"><path d="M8 0v16M0 8h16" stroke="#b8b8b8" stroke-width="2" /></svg></div>
              <div class="s-url"><span>training.ny.gov</span>
                <svg viewBox="0 0 18 18"><path d="M1 2h14v9M1 2v13h8M8 2v13M11 13v3l4 1v-5z" fill="none" stroke="#d4d4d4" /></svg>
                <svg viewBox="0 0 18 18"><path d="M15 6a7 7 0 1 0 1 4M16 2v4h-4" fill="none" stroke="#d4d4d4" /></svg>
                <svg viewBox="0 0 18 18"><path d="M10 6l-2-5-2 5H1l4 4-1 6 4-3M10 6h7M11 10h6M11 14h5" fill="none" stroke="#d4d4d4" /></svg>
                <svg viewBox="0 0 18 18"><path d="M9 12V1M5 5l4-4 4 4M4 8H2v9h14V8h-2" fill="none" stroke="#d8d8d8" /></svg>
                <svg viewBox="0 0 18 18"><path d="M1 9h2M8 9h2M15 9h2" stroke="#b0b0b0" stroke-width="1.500" /></svg>
              </div>
              <div class="s-nav"><a v-for="n in siteNav" :key="n" href="#">{{ n }}▾</a></div>
              <div class="s-title"><span>Training - TR0002</span><b></b></div>
              <div class="s-mode">Modality</div>
              <div class="dialog">
                <svg viewBox="0 0 76 76"><circle cx="38" cy="38" r="37" fill="#fff" stroke="#9b9b9b" stroke-width="1.300" /><path d="M22 22l32 34M54 22L22 56" stroke="#963634" stroke-width="5.500" stroke-linecap="round" /></svg>
                <h2>Incorrect</h2>
                <p>In the Search menu drop-down, select <b>Facility.</b></p>
                <button>Try Again</button>
              </div>
            </div>
            <div class="vscroll stage-scroll">
              <button aria-label="Scroll up"><i class="tri up tallt"></i></button>
              <span class="bar"><i class="grip"></i></span><span class="fill"></span>
              <button aria-label="Scroll down"><i class="tri down tallt"></i></button>
            </div>
          </div>

          <section class="timeline">
            <div class="tl-tabs">
              <button class="on">Timeline</button><button>States</button><button>Notes</button>
              <div class="tl-tools"><svg class="snap"><use href="#k-snap" /></svg><i class="tri down pale"></i><svg class="rest"><use href="#restore" /></svg></div>
            </div>
            <div class="tl-main">
              <div class="tl-grid">
                <div class="tl-head">
                  <div class="tl-left">
                    <button class="box" aria-label="Show all"><svg><use href="#eye" /></svg></button>
                    <button class="box" aria-label="Lock all"><svg><use href="#lock" /></svg></button>
                  </div>
                  <div class="ruler"><span v-for="s in seconds" :key="s">{{ s }}</span></div>
                </div>
                <div v-for="(t, i) in tracks" :key="t.name" class="tl-row">
                  <div class="tl-left">
                    <button class="box" aria-label="Toggle visibility"><svg><use href="#eye" /></svg></button>
                    <button class="box" aria-label="Toggle lock"></button>
                    <span class="tname">{{ t.name }}</span>
                  </div>
                  <div class="lane">
                    <div class="clip"><svg><use :href="'#' + t.icon" /></svg><span>{{ t.label }}</span><i class="tri right"></i></div>
                    <span v-if="i === 0" class="end">End</span>
                  </div>
                </div>
                <div class="playhead"></div>
              </div>
              <div class="vscroll tl-scroll">
                <button aria-label="Scroll up"><i class="tri up tallt"></i></button>
                <span class="bar"><i class="grip"></i></span><span class="fill"></span>
                <button aria-label="Scroll down"><i class="tri down tallt"></i></button>
              </div>
            </div>
            <div class="tl-foot">
              <div class="tl-play">
                <svg viewBox="0 0 262 30"><path d="M16 6l9 9-9 9zM45 7h16v16H45z" fill="#8f9ba2" /><path d="M82.500 5v20" stroke="#d8dde0" /><path d="M106 22l9-9 9 9zM199 22l8-9 4 4-4 5zM211 22l14-14 14 14z" fill="#8f9ba2" /><path d="M140 16h44" stroke="#8f9ba2" stroke-width="2.500" /><circle cx="150" cy="16" r="5" fill="#f0f4f7" stroke="#8f9ba2" stroke-width="2.500" /></svg>
                <span>00:05.00</span>
              </div>
              <div class="hscroll"><i class="tri left pale"></i><i class="tri right pale"></i></div>
              <div class="corner"></div>
            </div>
          </section>
        </div>

        <aside class="panels">
          <section class="triggers">
            <header><h2>Triggers</h2><i class="tri down pale"></i><svg class="rest"><use href="#restore" /></svg></header>
            <div class="toolbar">
              <button class="tool" aria-label="New trigger"><svg><use href="#t-new" /></svg></button>
              <button v-for="k in triggerTools" :key="k" class="tool off" disabled :aria-label="k"><svg><use :href="'#' + k" /></svg></button>
              <div class="tool off updown"><button disabled aria-label="Move up"><i class="tri up"></i></button><button disabled aria-label="Move down"><i class="tri down"></i></button></div>
              <label class="check group"><input v-model="group" type="checkbox" />Group</label>
              <button class="tool" aria-label="Variables"><svg><use href="#t-var" /></svg></button>
            </div>
            <div class="trigger-box">
              <div class="trigger-list">
                <h3>Object Triggers<svg viewBox="0 0 16 20"><path d="M2 0h12l-6 7zM2 20h12l-6-7z" fill="#adb7ba" /><path d="M0 10h16" stroke="#adb7ba" stroke-width="1.500" /></svg></h3>
                <h4><i class="tri down pale"></i>Try Again</h4>
                <p>Hide layer <a href="#">this layer</a></p>
              </div>
              <div class="vscroll trig-scroll">
                <button aria-label="Scroll up"><i class="tri up tallt"></i></button>
                <span class="bar"><i class="grip"></i></span><span class="fill"></span>
                <button aria-label="Scroll down"><i class="tri down tallt"></i></button>
              </div>
            </div>
          </section>
          <section class="comments">
            <header><h2>Comments</h2><span class="beta">Beta</span><i class="tri left pale"></i><svg class="rest"><use href="#restore" /></svg></header>
          </section>
          <section class="layers">
            <header><h2>Slide Layers</h2><i class="tri down pale"></i><svg class="rest"><use href="#restore" /></svg></header>
            <ul>
              <li v-for="l in layers" :key="l.name" :class="{ active: l.name === activeLayer }" @click="activeLayer = l.name">
                <svg class="lthumb" viewBox="0 0 48 34" preserveAspectRatio="none">
                  <template v-if="l.kind === 'dialog'"><path d="M0 0h48v34H0z" fill="#bcdaf3" /><path d="M9 9h30v18H9z" fill="#fff" /><path d="M23 12h2v2h-2z" fill="#c66" /><path d="M12 20h24M17 23h14" stroke="#ccc" /></template>
                  <template v-else-if="l.kind === 'faint'"><path d="M9 8h30v18H9z" fill="#fff" stroke="#f2f2f2" /><path d="M23 12h2v2h-2z" fill="#e2dccc" /><path d="M12 20h24M20 25h8" stroke="#e4e4e4" /></template>
                  <template v-else><path d="M0 0l20 12h28v22H18V17z" fill="#4d7fbe" /><path d="M27 20h13M25 26h16" stroke="#a8c3e4" stroke-width="2" /></template>
                </svg>
                {{ l.name }}
              </li>
            </ul>
            <div class="base">
              <svg class="lthumb" viewBox="0 0 48 34" preserveAspectRatio="none"><path d="M0 0h48v2.500H0z" fill="#444" /><path d="M6 11h18v20H6z" fill="#f6f2f4" /><circle cx="14" cy="23" r="6" fill="#5d5358" /><path d="M28 10h8M28 14h12M38 22h4" stroke="#c8ccd4" stroke-width="1" /></svg>
              Untitled Slide<em>(Base Layer)</em><svg class="eye"><use href="#eye" /></svg>
            </div>
            <div class="toolbar layer-tools">
              <button class="tool" aria-label="New layer"><svg><use href="#t-new" /></svg></button>
              <button class="tool" aria-label="Duplicate layer"><svg><use href="#t-dup" /></svg></button>
              <button class="tool" aria-label="Delete layer"><svg><use href="#t-trash" /></svg></button>
              <label class="check"><input v-model="dim" type="checkbox" />Dim</label>
              <button class="tool last" aria-label="Layer properties"><svg><use href="#gear" /></svg></button>
            </div>
          </section>
        </aside>
      </main>

      <footer class="status">
        <span>Slide 3 of 52</span><span>552 × 414</span><span>"Clean"</span>
        <div class="view">
          <button aria-label="Story view"><svg><use href="#s-grid" /></svg></button>
          <button class="sel" aria-label="Slide view"><svg><use href="#s-slide" /></svg></button>
          <button aria-label="Preview"><svg><use href="#s-show" /></svg></button>
          <span>100%</span>
          <svg class="pm" viewBox="0 0 12 12"><path d="M0 6h12" stroke="#b9b5bb" stroke-width="3" /></svg>
          <input v-model="zoom" type="range" min="0" max="100" aria-label="Zoom" />
          <svg class="pm" viewBox="0 0 12 12"><path d="M0 6h12M6 0v12" stroke="#b9b5bb" stroke-width="2.500" /></svg>
          <button aria-label="Fit to window"><svg class="fit"><use href="#s-fit" /></svg></button>
        </div>
      </footer>

      <div class="file-menu">
        <div class="menu-cols">
          <ul class="menu-left">
            <li v-for="m in menuItems" :key="m.label" :class="{ divided: m.divider }">
              <button><svg><use :href="'#' + m.icon" /></svg><span>{{ m.label }}</span><i v-if="m.submenu" class="tri right black"></i></button>
            </li>
          </ul>
          <div class="menu-right">
            <h2>Recent Projects</h2>
            <ul>
              <li v-for="r in recent" :key="r[0]"><a href="#"><span>{{ r[0] }}</span>{{ r[1] }}</a></li>
            </ul>
          </div>
        </div>
        <div class="menu-foot">
          <button><svg class="opt"><use href="#m-options" /></svg>Storyline Options</button>
          <button><svg class="ex"><use href="#m-exit" /></svg>Exit Storyline</button>
        </div>
      </div>
    </div>

    <div class="taskbar">
      <button class="weather" aria-label="Weather"><svg><use href="#w-weather" /></svg></button>
      <button class="start" aria-label="Start"><svg><use href="#w-start" /></svg></button>
      <label class="search"><svg class="mag"><use href="#w-search" /></svg><input type="text" placeholder="Search" /><span class="pill"><svg><use href="#w-case" /></svg></span></label>
      <div class="apps">
        <button v-for="a in apps" :key="a.id" :class="{ open: a.open, active: a.active }" :aria-label="a.name"><svg><use :href="'#' + a.id" /></svg></button>
      </div>
      <div class="tray">
        <div class="tray-left">
          <span class="wide"><svg class="chev" viewBox="0 0 18 12"><path d="M1 10l8-8 8 8" fill="none" stroke="#1b1b1b" stroke-width="2" /></svg></span>
          <span class="wide"><svg><use href="#y-cloud" /></svg></span>
          <span class="wide"><svg><use href="#y-mic" /></svg></span>
        </div>
        <span><svg><use href="#y-wifi" /></svg></span>
        <span><svg><use href="#y-sound" /></svg></span>
        <span><svg><use href="#y-battery" /></svg></span>
        <time>12:24 PM<br />1/23/2024</time>
        <span class="bell"><svg><use href="#y-bell" /></svg></span>
      </div>
    </div>
  </div>
</template>

<style>
html, body { height: 100%; }
body { margin: 0; }
#app { height: 100%; }
</style>

<style scoped>
* { box-sizing: border-box; }
.paints { position: absolute; width: 0; height: 0; }
.symbols { display: none; }
.symbols, .screen { font-family: "Open Sans", "Noto Sans", "Noto Sans CJK JP", sans-serif; }
.screen { display: flex; flex-direction: column; height: 100vh; min-height: 900px; font-size: 16px; line-height: 20px; color: #5d6b70; background: linear-gradient(#57acd0, #2f5f88 50%, #3c4a50); }
button { font: inherit; color: inherit; background: none; border: 0; padding: 0; margin: 0; display: flex; align-items: center; justify-content: center; flex: none; }
ul { list-style: none; margin: 0; padding: 0; }
h1, h2, h3, h4, p { margin: 0; font-weight: 400; }
a { color: inherit; text-decoration: none; }
svg { flex: none; display: block; overflow: visible; }

.tri { flex: none; width: 0; height: 0; border: 4px solid transparent; color: #858585; }
.tri.down { border-top: 5px solid; border-bottom: 0; border-top-color: currentColor; }
.tri.up { border-bottom: 7px solid; border-top: 0; border-left-color: transparent; border-right-color: transparent; border-bottom-color: currentColor; border-left-width: 6px; border-right-width: 6px; color: #b5b5b5; }
.tri.right { border: 5px solid transparent; border-left: 7px solid; border-right: 0; border-left-color: currentColor; }
.tri.left { border-right: 7px solid; border-left: 0; border-right-color: currentColor; }
.tri.pale { color: #aab4b8; border-width: 6px; }
.tri.down.pale { border-bottom: 0; }
.tri.left.pale { border-left: 0; }
.tri.right.pale { border-right: 0; }
.tri.tallt { border-left-width: 5px; border-right-width: 5px; }
.tri.down.tallt { border-top-width: 8px; color: #b4bcbf; }
.tri.up.tallt { border-bottom-width: 8px; color: #b4bcbf; }
.tri.black { color: #000; }

.app { position: relative; flex: 1; display: flex; flex-direction: column; min-height: 0; margin-right: 3px; background: #fff; }

.titlebar { display: grid; grid-template-columns: 1fr auto 1fr; align-items: center; height: 50px; flex: none; background: #f0f4f7; }
.titlebar h1 { font-size: 16px; color: #5f6568; }
.quick { display: flex; align-items: center; padding-left: 14px; gap: 18px; }
.quick svg { width: 22px; height: 22px; }
.quick .logo { width: 24px; height: 24px; margin-right: 31px; }
.customize { padding: 3px 1px 0; border-top: 2px solid #999; }
.window-buttons { display: flex; justify-content: flex-end; gap: 26px; padding-right: 17px; padding-top: 4px; }
.window-buttons svg { width: 18px; height: 18px; }

.tabs { display: flex; height: 33px; flex: none; background: #f0f4f7; border-bottom: 1px solid #dde3e7; color: #646b6f; }
.file { width: 88px; background: #0b74c4; color: #fff; }
.home { width: 87px; margin: 0 1px -1px 3px; background: #fff; border: 1px solid #dde3e7; border-bottom: 0; color: #1a84d2; }
.tab-grid { display: grid; grid-template-columns: 94px 91px 104px 130px 134px 86px 88px; }
.help { margin-left: auto; padding-right: 9px; }
.help svg { width: 24px; height: 24px; }

.ribbon { display: flex; flex: none; padding: 6px 0 5px; border-bottom: 1px solid #dfe6ea; }
.rgroup { border-right: 1px solid #dde5e9; height: 122px; display: flex; flex-direction: column; }
.rbody { flex: 1; display: flex; }
.rgroup footer { height: 25px; display: flex; align-items: center; color: #3e4548; padding-right: 5px; }
.rgroup footer span { flex: 1; text-align: center; }
.launch { width: 12px; height: 12px; }
.font-group { width: 884px; }
.font-body { flex-direction: column; padding: 9px 6px 0 0; gap: 7px; align-items: flex-end; }
.frow { display: flex; align-items: center; height: 40px; gap: 5px; }
.fields { height: 35px; }
.fields select { appearance: none; width: 75px; height: 35px; border: 2px solid #6d6d6d; border-radius: 0; margin-right: 6px; background: #f0f0f0 conic-gradient(from -40deg at 50% 100%, #999 80deg, transparent 0) no-repeat right 4px center / 8px 5px; }
.fields select:first-child { width: 200px; margin-right: -7px; }
.i28 { width: 28px; height: 28px; }
.i28:last-child { margin-left: 7px; }
.split { width: 52px; justify-content: flex-start; color: #858585; }
.split svg, .icon32 svg { width: 32px; height: 32px; }
.split .tri { margin-left: 7px; }
.paragraph { width: 415px; }
.para-tools { padding: 6px 0 0 9px; width: 250px; }
.prow { display: flex; align-items: center; height: 42px; }
.aligns { gap: 1px; padding-left: 1px; }
.lead { margin-left: 8px; }
.stack button { height: 31px; justify-content: flex-start; color: #6a7276; }
.stack button:disabled { color: #929292; }
.stack svg { width: 24px; height: 24px; margin-right: 5px; }
.stack .tri { margin-left: 12px; color: #858585; }
.stack.tall button { height: 33px; }
.drawing { width: 317px; }
.drawing .rbody { padding-left: 10px; }
.drawing .stack { padding: 1px 0 0 2px; }
.drawing .big { width: 68px; color: #929292; }
.big { flex-direction: column; justify-content: flex-start; padding: 3px 5px 0; color: #4d585d; }
.big svg { width: 48px; height: 50px; margin-bottom: 4px; }
.big .tri { margin-top: 11px; color: #858585; }
.big span .tri { display: inline-block; margin: 0 0 2px 4px; }
.publish { width: 204px; }
.publish .rbody { padding-left: 8px; }

.devices { display: flex; flex: none; justify-content: flex-end; height: 62px; border-bottom: 3px solid #1a84d2; padding-right: 6px; color: #56666c; }
.devices button { width: 45px; }
.devices svg { width: 26px; height: 26px; }
.devices button:last-child svg { width: 24px; height: 24px; }

.workspace { flex: 1; display: flex; min-height: 0; }
.vscroll { width: 31px; flex: none; display: flex; flex-direction: column; background: #dfe4e8; }
.vscroll button { height: 30px; background: #fff; border: 1px solid #dfe4e8; }
.vscroll .fill { flex: 1; }
.bar { display: flex; align-items: center; justify-content: center; background: #a8b2ba; }
.grip { width: 11px; height: 13px; background: repeating-linear-gradient(#d5dade 0 3px, transparent 3px 5px); }

.scenes { width: 284px; flex: none; display: flex; background: #f5f6f7; border-right: 1px solid #dfe4e8; border-left: 3px solid #fff; }
.scenes .vscroll { margin-right: 9px; }
.scene-list { flex: 1; display: flex; flex-direction: column; justify-content: flex-end; align-items: center; background: #f0f4f7; overflow: hidden; }
.thumb { background: #fff; flex: none; }
.previous { width: 162px; height: 122px; border: 2px solid #dcdcdc; display: flex; align-items: flex-end; background: #f0f0f0; }
.previous div { width: 106px; height: 40px; background: repeating-linear-gradient(#fafafa 0 7px, #e2e2e2 7px 8px); }
.scene-list p { margin: 16px 0 9px 34px; align-self: flex-start; line-height: 20px; }
.flow { width: 14px; height: 58px; margin-bottom: 16px; }
.current { width: 168px; height: 39px; border: 2px solid #2f94dc; border-bottom: 0; padding: 2px 2px 0; }
.t-top { height: 10px; background: #000; padding: 4px 0 0 8px; }
.t-top b { display: block; width: 36px; height: 6px; background: #e0e0e6; }
.t-url { height: 6px; background: #f2f2f2; }
.t-nav { height: 7px; background: #2b2b2b; }
.t-body { height: 12px; background: linear-gradient(90deg, #eee 58%, #fff 58% 95%, #5bb7d0 95%) 0 0 / 100% 6px no-repeat; }

.center { flex: 1; min-width: 0; display: flex; flex-direction: column; }
.stage { flex: 1; min-height: 0; display: flex; justify-content: space-between; background: #b7bfc7; overflow: hidden; border-bottom: 1px solid #b6b9cc; }
.slide { width: 828px; margin-left: 122px; background: #fff; display: flex; flex-direction: column; overflow: hidden; }
.s-strip { height: 22px; flex: none; background: #6a6a6a; padding-left: 240px; }
.s-strip svg { width: 16px; height: 16px; }
.s-url { height: 38px; flex: none; display: flex; align-items: center; gap: 20px; padding-right: 17px; font-size: 13px; color: #dedede; }
.s-url span { margin: 0 auto 0 170px; }
.s-url svg { width: 18px; height: 18px; }
.s-nav { height: 39px; flex: none; margin-right: 12px; border-radius: 0 2px 2px 0; background: linear-gradient(#e2e2e2, #dcdcdc); display: flex; align-items: center; gap: 23px; padding-left: 268px; color: #f6f6f6; font: 11px "Liberation Serif", serif; }
.s-title { display: flex; flex: none; justify-content: space-between; padding: 4px 24px 0 205px; height: 42px; color: #eee; font: 14px/30px "Liberation Serif", serif; }
.s-title b { width: 30px; height: 25px; background: radial-gradient(circle, #fff 5px, #f4f4f4 6px); }
.s-mode { padding-left: 419px; height: 33px; flex: none; color: #e4e4e4; font: 12px/24px "Liberation Serif", serif; }
.dialog { width: 518px; flex: none; align-self: center; height: 420px; border: 1px solid #8b8b8b; display: flex; flex-direction: column; align-items: center; color: #555; padding-top: 29px; }
.dialog svg { width: 76px; height: 76px; }
.dialog h2 { font-size: 21px; line-height: 30px; margin-top: 11px; }
.dialog p { font-size: 18px; line-height: 26px; margin: 48px 0 35px; white-space: nowrap; }
.dialog button { width: 271px; height: 50px; border: 1px solid #777; align-items: flex-start; font-size: 21px; line-height: 36px; }
.stage-scroll .bar { height: 276px; }

.timeline { height: 221px; flex: none; display: flex; flex-direction: column; background: #fff; }
.tl-tabs { display: flex; height: 61px; flex: none; padding: 4px 0 0 41px; gap: 39px; border-bottom: 1px solid #dbe1e5; font-size: 21px; }
.tl-tabs .on { color: #1a84d2; }
.tl-tools { display: flex; align-items: center; margin-left: auto; padding-right: 38px; }
.snap { width: 24px; height: 26px; margin-right: 31px; }
.rest { width: 20px; height: 20px; }
.tl-tools .rest { margin-left: 13px; }
.tl-main { display: flex; flex: 1; min-height: 0; }
.tl-grid { position: relative; flex: 1; min-width: 0; overflow: hidden; }
.tl-head, .tl-row { display: flex; }
.tl-head { height: 41px; background: #f0f4f7; border-bottom: 1px solid #dbe1e5; }
.tl-left { width: 338px; flex: none; display: flex; align-items: center; gap: 25px; padding-left: 40px; }
.box { width: 27px; height: 27px; background: #fff; border: 1px solid #cbd4da; }
.box svg { width: 18px; height: 16px; }
.tname { margin-left: 9px; }
.ruler { flex: 1; display: flex; padding-left: 36px; overflow: hidden; background: repeating-linear-gradient(90deg, transparent 0 17px, #b9c2c8 17px 18px) 0 100% / 100% 8px no-repeat; }
.ruler span { flex: 0 0 72px; text-align: center; padding: 7px 3px 0 0; background: linear-gradient(#b9c2c8, #b9c2c8) 35px 100% / 1px 12px no-repeat; }
.tl-row { height: 43px; border-bottom: 1px solid #e6eaed; }
.lane { flex: 1; display: flex; align-items: center; background: linear-gradient(#bcc7ce, #bcc7ce) 358px 0 / 2px 100% no-repeat; }
.clip { width: 358px; height: 36px; display: flex; align-items: center; padding: 0 6px 0 12px; background: #e5eaed; border: solid #cfd8de; border-width: 2px 0; font-size: 17px; }
.clip svg { width: 26px; height: 22px; margin-right: 13px; }
.clip span { flex: 1; white-space: nowrap; }
.end { align-self: flex-start; margin-left: 12px; padding-top: 2px; color: #c8d0d6; }
.playhead { position: absolute; left: 325px; top: 27px; bottom: 0; width: 26px; background: linear-gradient(#2a8bd6 50%, transparent 50%) 13px 0 / 1px 4px repeat-y; }
.playhead::before { content: ""; display: block; border: 13px solid transparent; border-top-color: #1487d8; border-bottom: 0; }
.tl-scroll .bar { height: 36px; background: #a0aab0; }
.tl-foot { display: flex; height: 32px; flex: none; border-top: 1px solid #dbe1e5; }
.tl-play { width: 338px; flex: none; display: flex; align-items: center; background: #f0f4f7; }
.tl-play svg { width: 262px; height: 30px; }
.hscroll { flex: 1; display: flex; justify-content: space-between; align-items: center; padding: 0 11px; background: #dfe3e6; }
.corner { width: 31px; background: #fff; }

.panels { width: 532px; flex: none; margin-right: 5px; border-left: 2px solid #dfe4e8; display: flex; flex-direction: column; background: #f0f4f7; }
.panels header { display: flex; align-items: center; height: 61px; flex: none; padding: 0 29px 0 31px; }
.panels h2 { flex: 1; font-size: 22px; color: #65757b; }
.panels .rest { margin-left: 15px; }
.toolbar { display: flex; align-items: center; gap: 3px; padding: 0 24px 0 31px; }
.tool { width: 42px; height: 42px; background: #fff; border: 1px solid #c5d0da; color: #76868b; }
.tool svg { width: 26px; height: 26px; }
.off { background: #f0f0f0; border-color: #bcbcbc; color: #b5b5b5; }
.updown { display: flex; flex-direction: column; }
.updown button { flex: 1; width: 100%; }
.updown button:first-child { border-bottom: 1px solid #bcbcbc; }
.updown .down { color: #b5b5b5; border-width: 7px 6px 0; }
.check { display: flex; align-items: center; gap: 12px; margin-right: 12px; font-size: 18px; }
.check input { appearance: none; width: 27px; height: 27px; margin: 0; border: 1px solid #c5d0da; background: #fff; }
.check input:checked::after { content: "✓"; display: block; width: 25px; text-align: center; font-size: 24px; line-height: 25px; font-weight: 700; color: #1487d8; }
.group { margin-left: auto; }
.triggers .toolbar { height: 42px; margin: -1px 0 18px; }
.trigger-box { display: flex; height: 111px; border: solid #dbe1e5; border-width: 1px 0; background: #fff; }
.trigger-list { flex: 1; margin-left: 5px; overflow: hidden; font-size: 17px; }
.trigger-list h3 { display: flex; justify-content: space-between; align-items: center; height: 44px; padding: 2px 18px 0 12px; background: #f0f4f7; font-size: 20px; font-weight: 600; border-bottom: 1px solid #dbe1e5; }
.trigger-list h3 svg { width: 16px; height: 20px; }
.trigger-list h4 { display: flex; align-items: center; gap: 29px; height: 43px; padding-left: 12px; font-size: 17px; font-weight: 600; background: #fcfcfc; border-bottom: 1px solid #e4e8eb; }
.trigger-list p { padding: 11px 0 0 53px; }
.trigger-list a { color: #1a7ea8; }
.trig-scroll .bar { height: 37px; }
.beta { padding: 3px 9px; border-radius: 3px; font-size: 17px; color: #fff; background: linear-gradient(135deg, #2bb6ff, #6f7bff 60%, #9a3ef8); }
.beta + .tri { margin-left: 9px; margin-right: 3px; }
.comments { border-bottom: 2px solid #dbe1e5; }
.layers { flex: 1; min-height: 0; display: flex; flex-direction: column; font-size: 17px; }
.layers header { border-bottom: 1px solid #dbe1e5; }
.layers ul { flex: 1; background: #fff; padding: 47px 2px 0 5px; }
.layers li { display: flex; align-items: center; height: 48px; padding-left: 26px; }
.layers .active { background: #1587d8; color: #fff; }
.lthumb { width: 48px; height: 34px; margin-right: 20px; background: #fff; border: 1px solid #c9d3da; overflow: hidden; }
.base { display: flex; align-items: center; height: 60px; flex: none; padding: 0 24px 0 31px; background: #f8f8f8; border: solid #dbe1e5; border-width: 1px 0; }
.base em { margin-left: auto; margin-right: 17px; font-size: 18px; }
.eye { width: 18px; height: 14px; }
.layer-tools { height: 72px; flex: none; padding: 0 12px 2px 31px; }
.layer-tools .check { margin-left: 11px; }
.last { margin-left: auto; color: #9a9ca2; }

.status { display: flex; align-items: center; gap: 24px; height: 48px; flex: none; padding-left: 15px; background: #39353c; color: #aaa6ad; font-size: 17px; }
.view { display: flex; align-items: center; margin-left: auto; padding-right: 30px; font-size: 16px; }
.view button { width: 35px; height: 34px; }
.view svg { width: 20px; height: 18px; }
.view .sel { background: #2a262d; margin: 0 2px; }
.view span { margin: 0 15px 0 6px; }
.view .pm { width: 12px; height: 12px; }
.view input { appearance: none; width: 151px; height: 20px; margin: 0 7px; background: linear-gradient(#d8d6da, #d8d6da) 0 50% / 100% 2px no-repeat; }
.view input::-webkit-slider-thumb { appearance: none; width: 13px; height: 13px; border-radius: 50%; background: #111; border: 3px solid #b9b5bb; }
.view .fit { width: 22px; height: 22px; }
.view button:last-child { width: auto; margin-left: 11px; }

.file-menu { position: absolute; left: 5px; top: 84px; width: 632px; height: 692px; display: flex; flex-direction: column; background: #fff; border: 1px solid #8e9294; box-shadow: 4px 4px 6px rgba(0, 0, 0, 0.15); }
.menu-cols { display: flex; flex: 1; }
.menu-left { width: 181px; padding-top: 2px; border-right: 1px solid #d0d3d5; }
.menu-left button { width: 100%; height: 63px; justify-content: flex-start; padding-left: 8px; }
.menu-left svg { width: 48px; height: 48px; margin-right: 6px; }
.menu-left .tri { margin: 0 13px 0 auto; }
.divided { padding-top: 4px; background: linear-gradient(#b5b8ba, #b5b8ba) 59px 1px / 119px 1px no-repeat; }
.menu-right { flex: 1; padding: 9px 0 0 7px; font-weight: 600; color: #61717a; }
.menu-right h2 { font-size: 16px; font-weight: 600; line-height: 22px; }
.menu-right ul { display: grid; grid-auto-rows: 1fr; height: 347px; margin: 12px 0 0 5px; }
.menu-right li { display: flex; align-items: center; white-space: nowrap; }
.menu-right span { display: inline-block; width: 18px; }
.menu-foot { height: 47px; display: flex; justify-content: flex-end; gap: 20px; padding: 0 8px 4px 0; border-top: 1px solid #9ea2a4; font-weight: 600; color: #61717a; }
.menu-foot .opt { width: 20px; height: 24px; margin-right: 7px; }
.menu-foot .ex { width: 20px; height: 18px; margin-right: 7px; }

.taskbar { display: flex; align-items: center; height: 72px; flex: none; border-top: 2px solid #b3b0a9; background: linear-gradient(90deg, #e7dfd9, #e6e1dc 40%, #dde3da 60%, #dce5dc 85%, #d9e2e8); color: #1b1b1b; }
.weather { width: 148px; justify-content: flex-start; padding-left: 13px; padding-bottom: 8px; }
.weather svg { width: 44px; height: 44px; }
.start { width: 66px; }
.start svg { width: 35px; height: 35px; }
.search { display: flex; align-items: center; width: 328px; height: 46px; margin: 0 5px 0 6px; padding: 0 2px 0 16px; border-radius: 23px; background: #f7f5f3; border: 1px solid #d2cdc8; }
.mag { width: 22px; height: 22px; margin-right: 16px; }
.search input { flex: 1; min-width: 0; border: 0; background: none; font: inherit; font-size: 19px; padding: 0; }
.search input::placeholder { color: #5a5856; opacity: 1; }
.pill { display: flex; align-items: center; justify-content: center; width: 78px; height: 40px; border-radius: 20px; background: #e6e4e2; }
.pill svg { width: 34px; height: 27px; }
.apps { display: flex; }
.apps button { position: relative; width: 56px; height: 58px; margin: 0 5px; border-radius: 5px; }
.apps svg { width: 36px; height: 36px; }
.apps .open::after { content: ""; position: absolute; bottom: 0; left: 50%; margin-left: -4px; width: 8px; height: 4px; border-radius: 2px; background: #86837f; }
.apps .active { background: #eef1ec; box-shadow: 0 0 1px #bbb; }
.apps .active::after { width: 24px; margin-left: -12px; background: #0b8084; }
.tray { display: flex; align-items: center; margin-left: auto; padding-right: 19px; }
.tray-left { display: flex; align-items: center; margin-right: 6px; }
.tray span { display: flex; justify-content: center; width: 36px; }
.tray .wide { width: 48px; }
.tray svg { width: 24px; height: 24px; }
.tray .chev { width: 18px; height: 12px; }
.tray time { width: 102px; text-align: right; font-size: 17px; line-height: 24px; }
.tray .bell { width: 46px; }
</style>
